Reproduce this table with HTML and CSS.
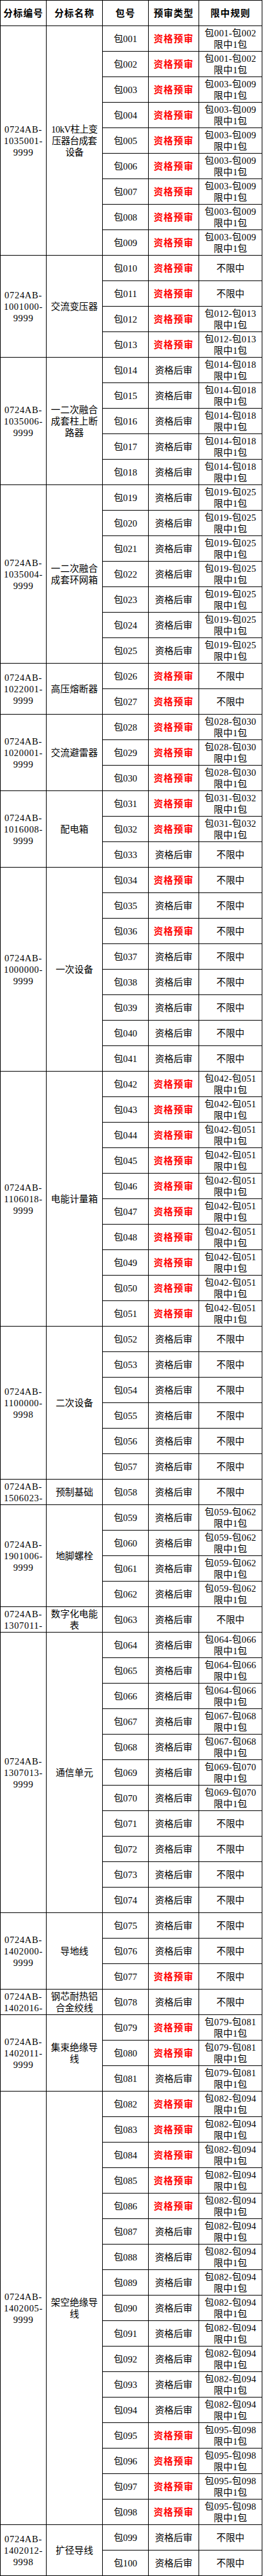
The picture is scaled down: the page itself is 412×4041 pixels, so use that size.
FILE: index.html
```html
<!DOCTYPE html>
<html lang="zh-CN">
<head>
<meta charset="utf-8">
<title>分标包号预审类型</title>
<link rel="stylesheet" href="styles.css">
</head>
<body>
<div class="sheet">
<div class="c h code">分标编号</div><div class="c h name">分标名称</div><div class="c h pkg">包号</div><div class="c h type">预审类型</div><div class="c h rule">限中规则</div>

<div class="c code r9"><span>0724AB-<br>1035001-<br>9999</span></div><div class="c name r9"><span class="tight">10kV柱上变<br>压器台成套<br>设备</span></div>
<div class="c pkg">包001</div><div class="c type pre">资格预审</div><div class="c rule"><span>包001-包002<br>限中1包</span></div>
<div class="c pkg">包002</div><div class="c type pre">资格预审</div><div class="c rule"><span>包001-包002<br>限中1包</span></div>
<div class="c pkg">包003</div><div class="c type pre">资格预审</div><div class="c rule"><span>包003-包009<br>限中1包</span></div>
<div class="c pkg">包004</div><div class="c type pre">资格预审</div><div class="c rule"><span>包003-包009<br>限中1包</span></div>
<div class="c pkg">包005</div><div class="c type pre">资格预审</div><div class="c rule"><span>包003-包009<br>限中1包</span></div>
<div class="c pkg">包006</div><div class="c type pre">资格预审</div><div class="c rule"><span>包003-包009<br>限中1包</span></div>
<div class="c pkg">包007</div><div class="c type pre">资格预审</div><div class="c rule"><span>包003-包009<br>限中1包</span></div>
<div class="c pkg">包008</div><div class="c type pre">资格预审</div><div class="c rule"><span>包003-包009<br>限中1包</span></div>
<div class="c pkg">包009</div><div class="c type pre">资格预审</div><div class="c rule"><span>包003-包009<br>限中1包</span></div>

<div class="c code r4"><span>0724AB-<br>1001000-<br>9999</span></div><div class="c name r4">交流变压器</div>
<div class="c pkg">包010</div><div class="c type pre">资格预审</div><div class="c rule">不限中</div>
<div class="c pkg">包011</div><div class="c type pre">资格预审</div><div class="c rule">不限中</div>
<div class="c pkg">包012</div><div class="c type pre">资格预审</div><div class="c rule"><span>包012-包013<br>限中1包</span></div>
<div class="c pkg">包013</div><div class="c type pre">资格预审</div><div class="c rule"><span>包012-包013<br>限中1包</span></div>

<div class="c code r5"><span>0724AB-<br>1035006-<br>9999</span></div><div class="c name r5"><span>一二次融合<br>成套柱上断<br>路器</span></div>
<div class="c pkg">包014</div><div class="c type">资格后审</div><div class="c rule"><span>包014-包018<br>限中1包</span></div>
<div class="c pkg">包015</div><div class="c type">资格后审</div><div class="c rule"><span>包014-包018<br>限中1包</span></div>
<div class="c pkg">包016</div><div class="c type">资格后审</div><div class="c rule"><span>包014-包018<br>限中1包</span></div>
<div class="c pkg">包017</div><div class="c type">资格后审</div><div class="c rule"><span>包014-包018<br>限中1包</span></div>
<div class="c pkg">包018</div><div class="c type">资格后审</div><div class="c rule"><span>包014-包018<br>限中1包</span></div>

<div class="c code r7"><span>0724AB-<br>1035004-<br>9999</span></div><div class="c name r7"><span>一二次融合<br>成套环网箱</span></div>
<div class="c pkg">包019</div><div class="c type">资格后审</div><div class="c rule"><span>包019-包025<br>限中1包</span></div>
<div class="c pkg">包020</div><div class="c type">资格后审</div><div class="c rule"><span>包019-包025<br>限中1包</span></div>
<div class="c pkg">包021</div><div class="c type">资格后审</div><div class="c rule"><span>包019-包025<br>限中1包</span></div>
<div class="c pkg">包022</div><div class="c type">资格后审</div><div class="c rule"><span>包019-包025<br>限中1包</span></div>
<div class="c pkg">包023</div><div class="c type">资格后审</div><div class="c rule"><span>包019-包025<br>限中1包</span></div>
<div class="c pkg">包024</div><div class="c type">资格后审</div><div class="c rule"><span>包019-包025<br>限中1包</span></div>
<div class="c pkg">包025</div><div class="c type">资格后审</div><div class="c rule"><span>包019-包025<br>限中1包</span></div>

<div class="c code r2"><span>0724AB-<br>1022001-<br>9999</span></div><div class="c name r2">高压熔断器</div>
<div class="c pkg">包026</div><div class="c type pre">资格预审</div><div class="c rule">不限中</div>
<div class="c pkg">包027</div><div class="c type pre">资格预审</div><div class="c rule">不限中</div>

<div class="c code r3"><span>0724AB-<br>1020001-<br>9999</span></div><div class="c name r3">交流避雷器</div>
<div class="c pkg">包028</div><div class="c type pre">资格预审</div><div class="c rule"><span>包028-包030<br>限中1包</span></div>
<div class="c pkg">包029</div><div class="c type pre">资格预审</div><div class="c rule"><span>包028-包030<br>限中1包</span></div>
<div class="c pkg">包030</div><div class="c type pre">资格预审</div><div class="c rule"><span>包028-包030<br>限中1包</span></div>

<div class="c code r3"><span>0724AB-<br>1016008-<br>9999</span></div><div class="c name r3">配电箱</div>
<div class="c pkg">包031</div><div class="c type pre">资格预审</div><div class="c rule"><span>包031-包032<br>限中1包</span></div>
<div class="c pkg">包032</div><div class="c type pre">资格预审</div><div class="c rule"><span>包031-包032<br>限中1包</span></div>
<div class="c pkg">包033</div><div class="c type">资格后审</div><div class="c rule">不限中</div>

<div class="c code r8"><span>0724AB-<br>1000000-<br>9999</span></div><div class="c name r8">一次设备</div>
<div class="c pkg">包034</div><div class="c type pre">资格预审</div><div class="c rule">不限中</div>
<div class="c pkg">包035</div><div class="c type">资格后审</div><div class="c rule">不限中</div>
<div class="c pkg">包036</div><div class="c type pre">资格预审</div><div class="c rule">不限中</div>
<div class="c pkg">包037</div><div class="c type">资格后审</div><div class="c rule">不限中</div>
<div class="c pkg">包038</div><div class="c type">资格后审</div><div class="c rule">不限中</div>
<div class="c pkg">包039</div><div class="c type">资格后审</div><div class="c rule">不限中</div>
<div class="c pkg">包040</div><div class="c type">资格后审</div><div class="c rule">不限中</div>
<div class="c pkg">包041</div><div class="c type">资格后审</div><div class="c rule">不限中</div>

<div class="c code r10"><span>0724AB-<br>1106018-<br>9999</span></div><div class="c name r10">电能计量箱</div>
<div class="c pkg">包042</div><div class="c type pre">资格预审</div><div class="c rule"><span>包042-包051<br>限中1包</span></div>
<div class="c pkg">包043</div><div class="c type pre">资格预审</div><div class="c rule"><span>包042-包051<br>限中1包</span></div>
<div class="c pkg">包044</div><div class="c type pre">资格预审</div><div class="c rule"><span>包042-包051<br>限中1包</span></div>
<div class="c pkg">包045</div><div class="c type pre">资格预审</div><div class="c rule"><span>包042-包051<br>限中1包</span></div>
<div class="c pkg">包046</div><div class="c type pre">资格预审</div><div class="c rule"><span>包042-包051<br>限中1包</span></div>
<div class="c pkg">包047</div><div class="c type pre">资格预审</div><div class="c rule"><span>包042-包051<br>限中1包</span></div>
<div class="c pkg">包048</div><div class="c type pre">资格预审</div><div class="c rule"><span>包042-包051<br>限中1包</span></div>
<div class="c pkg">包049</div><div class="c type pre">资格预审</div><div class="c rule"><span>包042-包051<br>限中1包</span></div>
<div class="c pkg">包050</div><div class="c type pre">资格预审</div><div class="c rule"><span>包042-包051<br>限中1包</span></div>
<div class="c pkg">包051</div><div class="c type pre">资格预审</div><div class="c rule"><span>包042-包051<br>限中1包</span></div>

<div class="c code r6"><span>0724AB-<br>1100000-<br>9998</span></div><div class="c name r6">二次设备</div>
<div class="c pkg">包052</div><div class="c type">资格后审</div><div class="c rule">不限中</div>
<div class="c pkg">包053</div><div class="c type">资格后审</div><div class="c rule">不限中</div>
<div class="c pkg">包054</div><div class="c type">资格后审</div><div class="c rule">不限中</div>
<div class="c pkg">包055</div><div class="c type">资格后审</div><div class="c rule">不限中</div>
<div class="c pkg">包056</div><div class="c type">资格后审</div><div class="c rule">不限中</div>
<div class="c pkg">包057</div><div class="c type">资格后审</div><div class="c rule">不限中</div>

<div class="c code"><span>0724AB-<br>1506023-</span></div><div class="c name">预制基础</div>
<div class="c pkg">包058</div><div class="c type">资格后审</div><div class="c rule">不限中</div>

<div class="c code r4"><span>0724AB-<br>1901006-<br>9999</span></div><div class="c name r4">地脚螺栓</div>
<div class="c pkg">包059</div><div class="c type">资格后审</div><div class="c rule"><span>包059-包062<br>限中1包</span></div>
<div class="c pkg">包060</div><div class="c type">资格后审</div><div class="c rule"><span>包059-包062<br>限中1包</span></div>
<div class="c pkg">包061</div><div class="c type">资格后审</div><div class="c rule"><span>包059-包062<br>限中1包</span></div>
<div class="c pkg">包062</div><div class="c type">资格后审</div><div class="c rule"><span>包059-包062<br>限中1包</span></div>

<div class="c code"><span>0724AB-<br>1307011-</span></div><div class="c name"><span>数字化电能<br>表</span></div>
<div class="c pkg">包063</div><div class="c type">资格后审</div><div class="c rule">不限中</div>

<div class="c code r11"><span>0724AB-<br>1307013-<br>9999</span></div><div class="c name r11">通信单元</div>
<div class="c pkg">包064</div><div class="c type">资格后审</div><div class="c rule"><span>包064-包066<br>限中1包</span></div>
<div class="c pkg">包065</div><div class="c type">资格后审</div><div class="c rule"><span>包064-包066<br>限中1包</span></div>
<div class="c pkg">包066</div><div class="c type">资格后审</div><div class="c rule"><span>包064-包066<br>限中1包</span></div>
<div class="c pkg">包067</div><div class="c type">资格后审</div><div class="c rule"><span>包067-包068<br>限中1包</span></div>
<div class="c pkg">包068</div><div class="c type">资格后审</div><div class="c rule"><span>包067-包068<br>限中1包</span></div>
<div class="c pkg">包069</div><div class="c type">资格后审</div><div class="c rule"><span>包069-包070<br>限中1包</span></div>
<div class="c pkg">包070</div><div class="c type">资格后审</div><div class="c rule"><span>包069-包070<br>限中1包</span></div>
<div class="c pkg">包071</div><div class="c type">资格后审</div><div class="c rule">不限中</div>
<div class="c pkg">包072</div><div class="c type">资格后审</div><div class="c rule">不限中</div>
<div class="c pkg">包073</div><div class="c type">资格后审</div><div class="c rule">不限中</div>
<div class="c pkg">包074</div><div class="c type">资格后审</div><div class="c rule">不限中</div>

<div class="c code r3"><span>0724AB-<br>1402000-<br>9999</span></div><div class="c name r3">导地线</div>
<div class="c pkg">包075</div><div class="c type">资格后审</div><div class="c rule">不限中</div>
<div class="c pkg">包076</div><div class="c type">资格后审</div><div class="c rule">不限中</div>
<div class="c pkg">包077</div><div class="c type pre">资格预审</div><div class="c rule">不限中</div>

<div class="c code"><span>0724AB-<br>1402016-</span></div><div class="c name"><span>钢芯耐热铝<br>合金绞线</span></div>
<div class="c pkg">包078</div><div class="c type">资格后审</div><div class="c rule">不限中</div>

<div class="c code r3"><span>0724AB-<br>1402011-<br>9999</span></div><div class="c name r3"><span>集束绝缘导<br>线</span></div>
<div class="c pkg">包079</div><div class="c type pre">资格预审</div><div class="c rule"><span>包079-包081<br>限中1包</span></div>
<div class="c pkg">包080</div><div class="c type pre">资格预审</div><div class="c rule"><span>包079-包081<br>限中1包</span></div>
<div class="c pkg">包081</div><div class="c type">资格后审</div><div class="c rule"><span>包079-包081<br>限中1包</span></div>

<div class="c code r17"><span>0724AB-<br>1402005-<br>9999</span></div><div class="c name r17"><span>架空绝缘导<br>线</span></div>
<div class="c pkg">包082</div><div class="c type pre">资格预审</div><div class="c rule"><span>包082-包094<br>限中1包</span></div>
<div class="c pkg">包083</div><div class="c type pre">资格预审</div><div class="c rule"><span>包082-包094<br>限中1包</span></div>
<div class="c pkg">包084</div><div class="c type pre">资格预审</div><div class="c rule"><span>包082-包094<br>限中1包</span></div>
<div class="c pkg">包085</div><div class="c type pre">资格预审</div><div class="c rule"><span>包082-包094<br>限中1包</span></div>
<div class="c pkg">包086</div><div class="c type pre">资格预审</div><div class="c rule"><span>包082-包094<br>限中1包</span></div>
<div class="c pkg">包087</div><div class="c type">资格后审</div><div class="c rule"><span>包082-包094<br>限中1包</span></div>
<div class="c pkg">包088</div><div class="c type">资格后审</div><div class="c rule"><span>包082-包094<br>限中1包</span></div>
<div class="c pkg">包089</div><div class="c type">资格后审</div><div class="c rule"><span>包082-包094<br>限中1包</span></div>
<div class="c pkg">包090</div><div class="c type">资格后审</div><div class="c rule"><span>包082-包094<br>限中1包</span></div>
<div class="c pkg">包091</div><div class="c type">资格后审</div><div class="c rule"><span>包082-包094<br>限中1包</span></div>
<div class="c pkg">包092</div><div class="c type">资格后审</div><div class="c rule"><span>包082-包094<br>限中1包</span></div>
<div class="c pkg">包093</div><div class="c type">资格后审</div><div class="c rule"><span>包082-包094<br>限中1包</span></div>
<div class="c pkg">包094</div><div class="c type">资格后审</div><div class="c rule"><span>包082-包094<br>限中1包</span></div>
<div class="c pkg">包095</div><div class="c type pre">资格预审</div><div class="c rule"><span>包095-包098<br>限中1包</span></div>
<div class="c pkg">包096</div><div class="c type pre">资格预审</div><div class="c rule"><span>包095-包098<br>限中1包</span></div>
<div class="c pkg">包097</div><div class="c type pre">资格预审</div><div class="c rule"><span>包095-包098<br>限中1包</span></div>
<div class="c pkg">包098</div><div class="c type pre">资格预审</div><div class="c rule"><span>包095-包098<br>限中1包</span></div>

<div class="c code r2"><span>0724AB-<br>1402012-<br>9998</span></div><div class="c name r2">扩径导线</div>
<div class="c pkg">包099</div><div class="c type">资格后审</div><div class="c rule">不限中</div>
<div class="c pkg">包100</div><div class="c type">资格后审</div><div class="c rule">不限中</div>
</div>
</body>
</html>
```

FILE: styles.css
```css
html, body {
  margin: 0;
  padding: 0;
  background: #ffffff;
}

body {
  font-family: "Liberation Serif", "Noto Sans CJK SC", serif;
  font-size: 14.67px;
  line-height: 18px;
  color: #000000;
}

.sheet {
  display: grid;
  grid-template-columns: 72px 88px 72px 79px 99px;
  grid-auto-rows: 40px;
  width: 410px;
  border-left: 1px solid #000000;
  border-top: 1px solid #000000;
}

.c {
  box-sizing: border-box;
  border-right: 1px solid #000000;
  border-bottom: 1px solid #000000;
  display: flex;
  align-items: center;
  justify-content: center;
  text-align: center;
  overflow: hidden;
  min-width: 0;
  min-height: 0;
  white-space: nowrap;
}

.code { grid-column: 1; }
.name { grid-column: 2; }
.pkg  { grid-column: 3; }
.type { grid-column: 4; }
.rule { grid-column: 5; }

.code span {
  letter-spacing: 0.6px;
}

.rule span {
  letter-spacing: 0.3px;
}

.h {
  font-weight: bold;
  letter-spacing: 1px;
}

.pre {
  color: #ff0000;
  font-weight: bold;
  letter-spacing: 1px;
}

.tight {
  letter-spacing: -0.6px;
}

.r2  { grid-row: span 2; }
.r3  { grid-row: span 3; }
.r4  { grid-row: span 4; }
.r5  { grid-row: span 5; }
.r6  { grid-row: span 6; }
.r7  { grid-row: span 7; }
.r8  { grid-row: span 8; }
.r9  { grid-row: span 9; }
.r10 { grid-row: span 10; }
.r11 { grid-row: span 11; }
.r17 { grid-row: span 17; }
```
